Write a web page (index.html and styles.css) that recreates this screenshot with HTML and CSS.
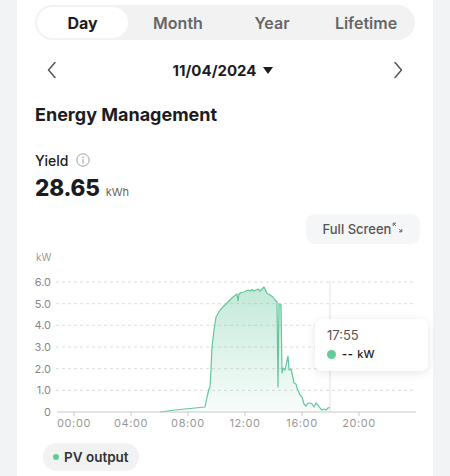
FILE: index.html
```html
<!DOCTYPE html>
<html>
<head>
<meta charset="utf-8">
<link rel="stylesheet" href="styles.css">
</head>
<body>
<div class="card">
  <div class="seg">
    <div class="seg-item active">Day</div>
    <div class="seg-item">Month</div>
    <div class="seg-item">Year</div>
    <div class="seg-item">Lifetime</div>
  </div>

  <div class="date-row">
    <svg class="chev" width="12" height="18" viewBox="0 0 12 18"><path d="M9 1.5 L2.5 9 L9 16.5" fill="none" stroke="#555" stroke-width="1.5" stroke-linecap="round" stroke-linejoin="round"/></svg>
    <div class="date">11/04/2024 <span class="caret"></span></div>
    <svg class="chev" width="12" height="18" viewBox="0 0 12 18"><path d="M3 1.5 L9.5 9 L3 16.5" fill="none" stroke="#555" stroke-width="1.5" stroke-linecap="round" stroke-linejoin="round"/></svg>
  </div>

  <h1 class="title">Energy Management</h1>

  <div class="yield-row">
    <span class="yield-label">Yield</span>
    <svg class="info" width="14" height="14" viewBox="0 0 14 14"><circle cx="7" cy="7" r="6.2" fill="none" stroke="#a0a0a0" stroke-width="1"/><circle cx="7" cy="4.2" r="0.8" fill="#a0a0a0"/><path d="M7 6.2V10.4" stroke="#a0a0a0" stroke-width="1.1"/></svg>
  </div>
  <div class="value-row"><span class="value">28.65</span><span class="unit">kWh</span></div>

  <div class="fs-row">
    <div class="fs-btn">Full Screen
      <svg width="11" height="11" viewBox="0 0 11 11"><path d="M1.2 4V1.2H4 M1.2 1.2L3.8 3.8" fill="none" stroke="#666" stroke-width="1"/><path d="M9.8 7V9.8H7 M9.8 9.8L7.2 7.2" fill="none" stroke="#666" stroke-width="1"/></svg>
    </div>
  </div>

  <div class="chart">
    <svg width="416" height="182" viewBox="17 250 416 182">
      <defs>
        <linearGradient id="g" x1="0" y1="0" x2="0" y2="1">
          <stop offset="0" stop-color="#5fc59a" stop-opacity="0.38"/>
          <stop offset="1" stop-color="#5fc59a" stop-opacity="0.04"/>
        </linearGradient>
      </defs>
      <text class="ylab" x="36" y="261">kW</text>
      <g class="grid">
        <line x1="56" y1="282" x2="416" y2="282"/>
        <line x1="56" y1="303.7" x2="416" y2="303.7"/>
        <line x1="56" y1="325.3" x2="416" y2="325.3"/>
        <line x1="56" y1="347" x2="416" y2="347"/>
        <line x1="56" y1="368.7" x2="416" y2="368.7"/>
        <line x1="56" y1="390.3" x2="416" y2="390.3"/>
      </g>
      <g class="ylabels">
        <text x="51" y="286">6.0</text>
        <text x="51" y="307.7">5.0</text>
        <text x="51" y="329.3">4.0</text>
        <text x="51" y="351">3.0</text>
        <text x="51" y="372.7">2.0</text>
        <text x="51" y="394.3">1.0</text>
        <text x="51" y="416">0</text>
      </g>
      <line x1="330" y1="281" x2="330" y2="412" stroke="#e2e2e2" stroke-width="1"/>
      <path fill="url(#g)" d="M160,412 L175,410 L190,408.5 L205,407 L207,397 L209,389 L210,387 L211,370 L212,347 L214,330 L216,317 L220,310 L225,305 L230,300 L233,297 L237,294 L238,301 L239,294 L241,292.5 L244,292 L246,291 L248,290 L250,291 L252,289.5 L254,291 L256,290 L258,289 L260,291 L262,289 L264,287 L265,289 L267,293.5 L270,295 L273,297 L275,300 L277,302 L278,387 L279,304 L280,304 L281,305 L282,373 L283,368 L285,370 L286,365 L288,356 L289,370 L291,369 L293,378 L294,383 L296,384 L297,388 L300,395 L302,397 L304,404 L306,406 L308,403 L310,403 L312,404 L314,407 L316,403 L318,405 L320,408 L322,410 L324,409 L326,410 L328,408 L330,407.5 L330,412 Z"/>
      <path fill="none" stroke="#62c79c" stroke-width="1.2" stroke-linejoin="round" d="M160,412 L175,410 L190,408.5 L205,407 L207,397 L209,389 L210,387 L211,370 L212,347 L214,330 L216,317 L220,310 L225,305 L230,300 L233,297 L237,294 L238,301 L239,294 L241,292.5 L244,292 L246,291 L248,290 L250,291 L252,289.5 L254,291 L256,290 L258,289 L260,291 L262,289 L264,287 L265,289 L267,293.5 L270,295 L273,297 L275,300 L277,302 L278,387 L279,304 L280,304 L281,305 L282,373 L283,368 L285,370 L286,365 L288,356 L289,370 L291,369 L293,378 L294,383 L296,384 L297,388 L300,395 L302,397 L304,404 L306,406 L308,403 L310,403 L312,404 L314,407 L316,403 L318,405 L320,408 L322,410 L324,409 L326,410 L328,408 L330,407.5"/>
      <line x1="57" y1="412" x2="416" y2="412" stroke="#c8c8c8" stroke-width="1"/>
      <g stroke="#c8c8c8" stroke-width="1">
        <line x1="74" y1="412" x2="74" y2="416"/>
        <line x1="131" y1="412" x2="131" y2="416"/>
        <line x1="188" y1="412" x2="188" y2="416"/>
        <line x1="245" y1="412" x2="245" y2="416"/>
        <line x1="302" y1="412" x2="302" y2="416"/>
        <line x1="359" y1="412" x2="359" y2="416"/>
      </g>
      <g class="xlabels">
        <text x="74" y="427">00:00</text>
        <text x="131" y="427">04:00</text>
        <text x="188" y="427">08:00</text>
        <text x="245" y="427">12:00</text>
        <text x="302" y="427">16:00</text>
        <text x="359" y="427">20:00</text>
      </g>
    </svg>
    <div class="tooltip">
      <div class="tt-time">17:55</div>
      <div class="tt-row"><span class="dot big"></span><span class="tt-val">--</span><span class="tt-unit">kW</span></div>
    </div>
  </div>

  <div class="legend"><span class="dot"></span>PV output</div>
</div>
</body>
</html>
```

FILE: styles.css
```css
* { box-sizing: border-box; }
html, body { margin: 0; padding: 0; }
body {
  background: #f2f3f5;
  font-family: Inter, "Noto Sans", sans-serif;
  color: #1c1c1e;
  width: 450px;
  height: 476px;
  overflow: hidden;
}
.card {
  margin-left: 17px;
  width: 416px;
  min-height: 476px;
  background: #fff;
  padding: 5px 18px 0 18px;
}
.seg {
  display: grid;
  grid-template-columns: repeat(4, 1fr);
  height: 35px;
  background: #f2f2f3;
  border-radius: 18px;
  padding: 2px;
}
.seg-item {
  display: flex;
  align-items: center;
  justify-content: center;
  font-size: 16px;
  font-weight: 600;
  color: #666;
  border-radius: 16px;
}
.seg-item.active {
  background: #fff;
  color: #1c1c1e;
  font-weight: 700;
  margin-right: 3px;
}
.date-row {
  margin-top: 15px;
  height: 30px;
  display: flex;
  align-items: center;
  justify-content: space-between;
  padding: 0 11px 0 11px;
}
.chev { display: block; }
.date {
  font-size: 15px;
  font-weight: 700;
  display: flex;
  align-items: center;
  gap: 7px;
  margin-right: 4px;
}
.caret {
  width: 0; height: 0;
  border-left: 5px solid transparent;
  border-right: 5px solid transparent;
  border-top: 7px solid #1c1c1e;
}
.title {
  margin: 18px 0 0 0;
  font-size: 18px;
  line-height: 24px;
  font-weight: 700;
}
.yield-row {
  margin-top: 23px;
  height: 20px;
  display: flex;
  align-items: center;
  gap: 8px;
}
.yield-label { font-size: 14px; font-weight: 500; }
.info { display: block; }
.value-row {
  margin-top: 4px;
  height: 28px;
  line-height: 28px;
  display: flex;
  align-items: baseline;
  gap: 6px;
}
.value { font-size: 22.5px; font-weight: 800; letter-spacing: -0.2px; }
.unit { font-size: 11px; color: #666; }
.fs-row {
  margin-top: 12px;
  display: flex;
  justify-content: flex-end;
  margin-right: -5px;
}
.fs-btn {
  height: 30px;
  width: 114px;
  background: #f5f6f8;
  border-radius: 9px;
  display: flex;
  align-items: center;
  justify-content: center;
  gap: 1px;
  font-size: 13px;
  font-weight: 500;
  color: #555;
}
.fs-btn svg { margin-top: -3px; }
.chart {
  position: relative;
  margin: 6px -18px 0 -18px;
  width: 416px;
  height: 182px;
}
.chart svg { display: block; }
.grid line { stroke: #dcdcdc; stroke-width: 1; stroke-dasharray: 3 3; }
.ylab { font-size: 10px; fill: #999; font-family: Inter, sans-serif; }
.ylabels text { font-size: 11px; fill: #888; text-anchor: end; font-family: Inter, sans-serif; }
.xlabels text { font-size: 11px; fill: #999; text-anchor: middle; letter-spacing: 0.6px; font-family: Inter, sans-serif; }
.tooltip {
  position: absolute;
  left: 298px;
  top: 69px;
  width: 113px;
  height: 52px;
  background: #fff;
  border-radius: 7px;
  box-shadow: 0 2px 10px rgba(0,0,0,0.10);
  padding: 8px 12px;
}
.tt-time { font-size: 13px; color: #555; line-height: 16px; }
.tt-row {
  margin-top: 4px;
  display: flex;
  align-items: center;
  font-size: 11px;
  line-height: 14px;
}
.tt-val { font-weight: 700; margin-left: 6px; letter-spacing: 0.5px; }
.tt-unit { margin-left: 4px; font-weight: 500; color: #222; }
.dot {
  width: 6px; height: 6px;
  border-radius: 50%;
  background: #62cc9b;
  display: inline-block;
}
.dot.big { width: 9px; height: 9px; }
.legend {
  margin: 11px 0 0 8px;
  width: 96px;
  height: 28px;
  background: #f2f2f3;
  border-radius: 14px;
  display: flex;
  align-items: center;
  gap: 5px;
  padding-left: 10px;
  font-size: 13.5px;
  font-weight: 600;
  color: #333;
}
```
